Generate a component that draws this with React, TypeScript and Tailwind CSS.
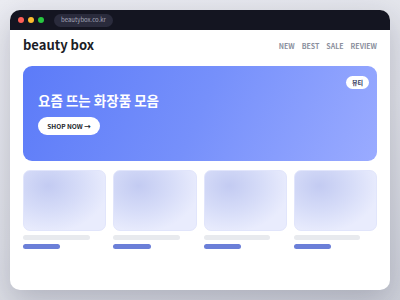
import React from "react";

const font = { fontFamily: '"Noto Sans CJK KR", "Noto Sans", sans-serif' };

function Card() {
  return (
    <div className="flex flex-col">
      <div className="h-[61px] rounded-[7px] border border-[#e1e5fb] bg-[radial-gradient(ellipse_at_30%_25%,#c3cbf2_0%,#d6dcf8_40%,#e9ecfd_75%)]" />
      <div className="mt-[4px] h-[5px] w-[80%] rounded-full bg-[#e8eaee]" />
      <div className="mt-[4px] h-[5px] w-[45%] rounded-full bg-[#6b7fd8]" />
    </div>
  );
}

export default function App() {
  return (
    <div
      className="w-[400px] h-[300px] bg-[linear-gradient(160deg,#ebecf2_0%,#dfe1e8_55%,#cdd0d9_100%)] p-[10px]"
      style={font}
    >
      <div className="h-[280px] rounded-[10px] bg-white overflow-hidden flex flex-col shadow-[0_10px_30px_rgba(30,34,60,0.22)]">
        <div className="h-[20px] bg-[#141521] flex items-center pl-[8px]">
          <div className="flex items-center gap-[4px]">
            <span className="w-[6px] h-[6px] rounded-full bg-[#fe5f57]" />
            <span className="w-[6px] h-[6px] rounded-full bg-[#febc2e]" />
            <span className="w-[6px] h-[6px] rounded-full bg-[#28c840]" />
          </div>
          <div className="ml-[10px] h-[13px] w-[59px] rounded-full bg-[#2a2b3c] flex items-center justify-center text-[6px] leading-none text-[#a3a6b8]">
            beautybox.co.kr
          </div>
        </div>
        <div className="flex-1 px-[13px]">
          <div className="pt-[5px] h-[25px] flex items-start justify-between">
            <div className="text-[13px] leading-[20px] font-bold text-[#1c1d26]">beauty box</div>
            <div className="flex gap-[7px] pt-[6px] text-[7px] leading-[10px] font-semibold text-[#8a8f9d]">
              <span>NEW</span>
              <span>BEST</span>
              <span>SALE</span>
              <span>REVIEW</span>
            </div>
          </div>
          <div className="mt-[11px] h-[95px] rounded-[9px] bg-[linear-gradient(115deg,#5c7bf8_0%,#7690fb_50%,#9aabff_100%)] relative pl-[15px] pt-[24px]">
            <div className="absolute right-[8px] top-[10px] h-[13px] w-[23px] rounded-full bg-white flex items-center justify-center text-[6px] font-bold text-[#2a2f55] leading-none">
              뷰티
            </div>
            <div className="text-[13.5px] leading-[20px] font-bold text-white">요즘 뜨는 화장품 모음</div>
            <div className="mt-[7px] h-[18px] w-[62px] rounded-full bg-white flex items-center justify-center text-[6.5px] font-bold text-[#1d1f2c] leading-none">
              SHOP NOW →
            </div>
          </div>
          <div className="mt-[9px] grid grid-cols-4 gap-[7px]">
            <Card />
            <Card />
            <Card />
            <Card />
          </div>
        </div>
      </div>
    </div>
  );
}
